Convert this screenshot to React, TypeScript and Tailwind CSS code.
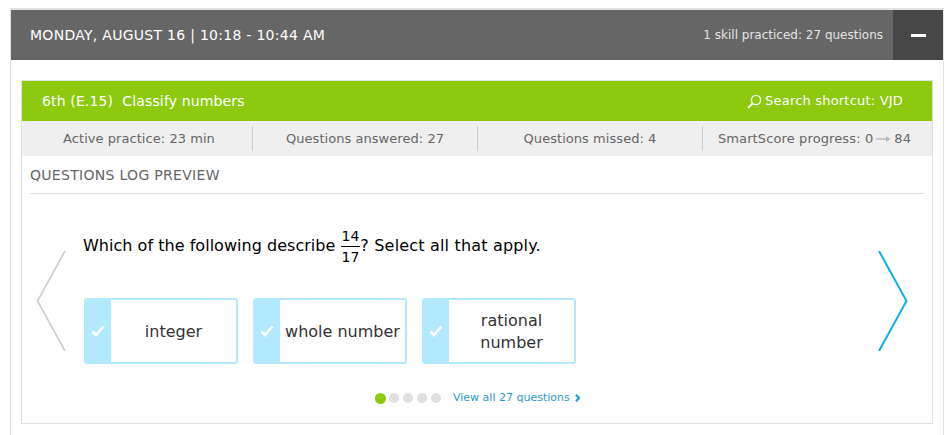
const stats = [
  { label: 'Active practice: 23 min', w: 'w-[231px]', pad: 'pl-[4px]' },
  { label: 'Questions answered: 27', w: 'w-[225px]', pad: '' },
  { label: 'Questions missed: 4', w: 'w-[225px]', pad: '' },
];

function Choice({ lines }: { lines: string[] }) {
  return (
    <div className="flex h-[66px] w-[154px] overflow-hidden rounded-[3px] border-2 border-[#b3e9ff]">
      <div className="flex w-[25px] items-center justify-center bg-[#b3e9ff] pr-[2px]">
        <svg width="14" height="12" viewBox="0 0 14 12">
          <path d="M1.5 6.5 5 10l7.5-8.5" fill="none" stroke="#fff" strokeWidth="2.6" />
        </svg>
      </div>
      <div className="flex flex-1 flex-col items-center justify-center pt-[1px] text-[16px] leading-[22px] text-[#333]">
        {lines.map((line) => (
          <span key={line}>{line}</span>
        ))}
      </div>
    </div>
  );
}

export default function App() {
  return (
    <div className="h-[435px] overflow-hidden bg-white pt-2 font-['DejaVu_Sans',sans-serif]">
      <div className="ml-[10px] h-full w-[934px] border-x border-t-2 border-[#e2e2e2]">
        {/* day header */}
        <div className="flex h-[50px] items-center bg-[#666] pl-[19px] text-white">
          <div className="text-[14px] tracking-[0.28px]">MONDAY, AUGUST 16 | 10:18 - 10:44 AM</div>
          <div className="ml-auto pr-[10px] text-[12px] text-[#e4e4e4]">1 skill practiced: 27 questions</div>
          <div className="flex h-full w-[50px] items-center justify-center bg-[#474747]">
            <div className="h-[3px] w-[15px] bg-white" />
          </div>
        </div>

        {/* skill card */}
        <div className="mx-[10px] mt-[20px] h-[344px] border border-[#e0e0e0]">
          <div className="flex h-[40px] items-center justify-between bg-[#8cc90f] pl-[20px] pr-[29px] text-[14px] text-white">
            <div className="whitespace-pre tracking-[0.14px]">6th (E.15)  Classify numbers</div>
            <div className="flex items-center gap-[3px] text-[13px] tracking-[0.2px]">
              <svg width="15" height="15" viewBox="0 0 15 15">
                <circle cx="9" cy="6" r="4.6" fill="none" stroke="#fff" strokeWidth="1.4" />
                <path d="M5.6 9.4 1 14" fill="none" stroke="#fff" strokeWidth="1.8" />
              </svg>
              <span>Search shortcut: VJD</span>
            </div>
          </div>
          <div className="flex h-[35px] items-center bg-[#efefef] text-[13px] text-[#666]">
            {stats.map((s) => (
              <div key={s.label} className={`flex h-[25px] items-center justify-center border-r border-[#ccc] tracking-[0.05px] ${s.w} ${s.pad}`}>
                {s.label}
              </div>
            ))}
            <div className="flex flex-1 items-center justify-center gap-[3px] pr-[6px] tracking-[0.12px]">
              <span>SmartScore progress: 0</span>
              <svg width="15" height="8" viewBox="0 0 15 8">
                <path d="M0 4h11" stroke="#bbb" strokeWidth="1.5" />
                <path d="M10 1l4.5 3-4.5 3z" fill="#bbb" />
              </svg>
              <span>84</span>
            </div>
          </div>
          <div className="mx-[8px] flex h-[38px] items-center border-b border-[#e0e0e0] pt-[1px] text-[14px] tracking-[0.3px] text-[#666]">
            QUESTIONS LOG PREVIEW
          </div>

          {/* question preview */}
          <div className="flex">
            <div className="ml-[14px] mt-[57px] w-[31px]">
              <svg width="31" height="100" viewBox="0 0 31 100">
                <path d="M29 0 1.5 50 29 100" fill="none" stroke="#ccc" strokeWidth="1.6" />
              </svg>
            </div>
            <div className="ml-[16px] flex-1 pt-[33px]">
              <div className="flex h-[38px] items-center text-[16px] text-black">
                <span className="tracking-[0.03px]">Which of the following describe&nbsp;</span>
                <span className="flex flex-col items-center text-[14px] leading-[20px]">
                  <span className="border-b border-black px-[1px]">14</span>
                  <span className="px-[1px]">17</span>
                </span>
                <span className="tracking-[0.18px]">? Select all that apply.</span>
              </div>
              <div className="mt-[33px] flex gap-[15px] pl-[1px]">
                <Choice lines={['integer']} />
                <Choice lines={['whole number']} />
                <Choice lines={['rational', 'number']} />
              </div>
              <div className="mt-[26px] flex items-center gap-[4px] pl-[292px]">
                <span className="-mr-[1px] h-[11px] w-[11px] rounded-full bg-[#8cc90f]" />
                <span className="h-[10px] w-[10px] rounded-full bg-[#e0e0e0]" />
                <span className="h-[10px] w-[10px] rounded-full bg-[#e0e0e0]" />
                <span className="h-[10px] w-[10px] rounded-full bg-[#e0e0e0]" />
                <span className="h-[10px] w-[10px] rounded-full bg-[#e0e0e0]" />
                <span className="ml-[8px] text-[11px] text-[#2a9bc9]">View all 27 questions</span>
                <svg className="ml-[1px]" width="6" height="8" viewBox="0 0 6 8">
                  <path d="M1 .8 4 4 1 7.2" fill="none" stroke="#1aa0d8" strokeWidth="2.2" />
                </svg>
              </div>
            </div>
            <div className="mr-[24px] mt-[57px] w-[31px]">
              <svg width="31" height="100" viewBox="0 0 31 100">
                <path d="M2 0 29.5 50 2 100" fill="none" stroke="#0faeea" strokeWidth="2" />
              </svg>
            </div>
          </div>
        </div>
      </div>
    </div>
  );
}
